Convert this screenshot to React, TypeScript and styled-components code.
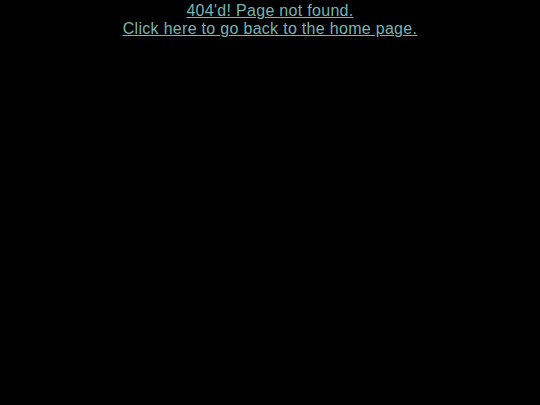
import React from "react";
import styled, { createGlobalStyle } from "styled-components";

const Global = createGlobalStyle`
  html, body { margin: 0; padding: 0; background: #000; }
  body { font-family: "Liberation Sans", Arial, sans-serif; }
`;

const Page = styled.div`
  min-height: 405px;
  background: #000;
  display: flex;
  flex-direction: column;
  align-items: center;
  padding-top: 2px;
`;

const Message = styled.a`
  color: #7ab3b3;
  font-size: 16px;
  line-height: 18px;
  text-decoration: underline;
  text-align: center;
  letter-spacing: 0.3px;
`;

export default function App() {
  return (
    <>
      <Global />
      <Page>
        <Message href="#">
          404'd! Page not found.
          <br />
          Click here to go back to the home page.
        </Message>
      </Page>
    </>
  );
}
